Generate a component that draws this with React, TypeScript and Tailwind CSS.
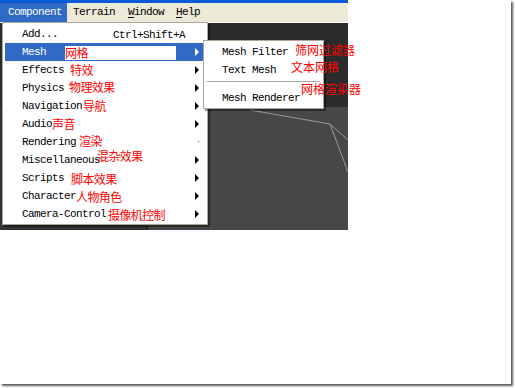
import React from "react";

const mono = "font-['Liberation_Mono',monospace] text-[11px] tracking-[-0.6px] leading-none";
const cjk = "font-['Noto_Sans_CJK_SC','Noto_Sans_CJK_SC',sans-serif] text-[12px] leading-[14px] text-[#ff0000] whitespace-nowrap";

type Item = { label: string; note?: string; noteX?: number; noteDy?: number; arrow?: boolean; dot?: boolean; active?: boolean; shortcut?: string };

const items: Item[] = [
  { label: "Add...", shortcut: "Ctrl+Shift+A" },
  { label: "Mesh", note: "网格", noteX: 60, noteDy: 0, arrow: true, active: true },
  { label: "Effects", note: "特效", noteX: 65, noteDy: 0, arrow: true },
  { label: "Physics", note: "物理效果", noteX: 64, noteDy: -1, arrow: true },
  { label: "Navigation", note: "导航", noteX: 78, noteDy: 0, arrow: true },
  { label: "Audio", note: "声音", noteX: 47, noteDy: 0, arrow: true },
  { label: "Rendering", note: "渲染", noteX: 74, noteDy: -1, dot: true },
  { label: "Miscellaneous", note: "混杂效果", noteX: 92, noteDy: -4, arrow: true },
  { label: "Scripts", note: "脚本效果", noteX: 66, noteDy: 1, arrow: true },
  { label: "Character", note: "人物角色", noteX: 71, noteDy: 1, arrow: true },
  { label: "Camera-Control", note: "摄像机控制", noteX: 103, noteDy: 1, arrow: true },
];

function Arrow({ white }: { white?: boolean }) {
  return (
    <svg width="5" height="8" viewBox="0 0 5 8" className="absolute left-[190px] top-[5px]">
      <path d="M0 0 L4 4 L0 8 Z" fill={white ? "#ffffff" : "#000000"} />
    </svg>
  );
}

export default function App() {
  return (
    <div className="w-[516px] h-[388px] bg-white">
      <div className="relative w-[511px] h-[384px] bg-white shadow-[2px_2px_2px_rgba(0,0,0,0.65)]">
        <div className="w-[348px] h-[230px] flex flex-col">
          <div className="h-[3px] bg-[#0a5ad8]" />
          <div className={`h-[19px] bg-[#ece9d8] flex items-stretch ${mono}`}>
            <div className="w-[67px] pl-[8px] bg-[#316ac5] text-white flex items-center">Component</div>
            <div className="w-[55px] pl-[6px] text-black flex items-center">Terrain</div>
            <div className="w-[48px] pl-[6px] text-black flex items-center">
              <span className="underline underline-offset-2">W</span>indow
            </div>
            <div className="pl-[6px] text-black flex items-center">
              <span className="underline underline-offset-2">H</span>elp
            </div>
          </div>
          <div className="h-px bg-white" />
          <div className="flex-1 bg-[#2b2b2b] flex flex-col">
            <div className="h-[84px]" />
            <div className="flex-1 flex relative">
              <div className="w-[148px] bg-[#333333] border-r-2 border-[#262626]" />
              <div className="flex-1 bg-[#474747]" />
              <svg className="absolute left-0 top-0" width="348" height="123" viewBox="0 0 348 123">
                <path d="M250 3 L330 17 L348 33 M330 17 L348 65" stroke="#9a9a9a" strokeWidth="1" fill="none" />
              </svg>
            </div>
          </div>
        </div>

        {/* Main menu */}
        <div className="absolute left-[2px] top-[22px] w-[206px] bg-white border border-[#aca899] pt-[2px] pb-[1px] px-[2px] shadow-[2px_2px_0_rgba(0,0,0,0.4)]">
          {items.map((it) => (
            <div
              key={it.label}
              className={`relative h-[18px] flex items-center pl-[17px] ${mono} ${it.active ? "bg-[#316ac5] text-white" : "text-black"}`}
            >
              <span>{it.label}</span>
              {it.shortcut && <span className="absolute left-[108px] top-[5px]">{it.shortcut}</span>}
              {it.arrow && <Arrow white={it.active} />}
              {it.dot && <div className="absolute left-[193px] top-[8px] w-px h-px bg-[#555]" />}
              {it.note && it.active && (
                <div className="absolute left-[60px] top-[3px] w-[111px] h-[14px] bg-white">
                  <span className={`${cjk} block`}>{it.note}</span>
                </div>
              )}
              {it.note && !it.active && (
                <span className={`absolute ${cjk}`} style={{ left: it.noteX, top: 2 + (it.noteDy ?? 0) }}>
                  {it.note}
                </span>
              )}
            </div>
          ))}
        </div>

        {/* Submenu */}
        <div className={`absolute left-[203px] top-[40px] w-[121px] bg-white border border-[#aca899] pt-[2px] pb-[1px] shadow-[2px_2px_0_rgba(0,0,0,0.4)] ${mono} text-black`}>
          <div className="h-[18px] flex items-center pl-[18px]">Mesh Filter</div>
          <div className="h-[18px] flex items-center pl-[18px]">Text Mesh</div>
          <div className="h-[10px] pt-[2px] px-[3px]">
            <div className="h-px bg-[#aca899]" />
          </div>
          <div className="h-[18px] flex items-center pl-[18px]">Mesh Renderer</div>
        </div>

        <span className={`absolute left-[295px] top-[43px] ${cjk}`}>筛网过滤器</span>
        <span className={`absolute left-[291px] top-[60px] ${cjk}`}>文本网格</span>
        <span className={`absolute left-[301px] top-[82px] ${cjk}`}>网格渲染器</span>
      </div>
    </div>
  );
}
